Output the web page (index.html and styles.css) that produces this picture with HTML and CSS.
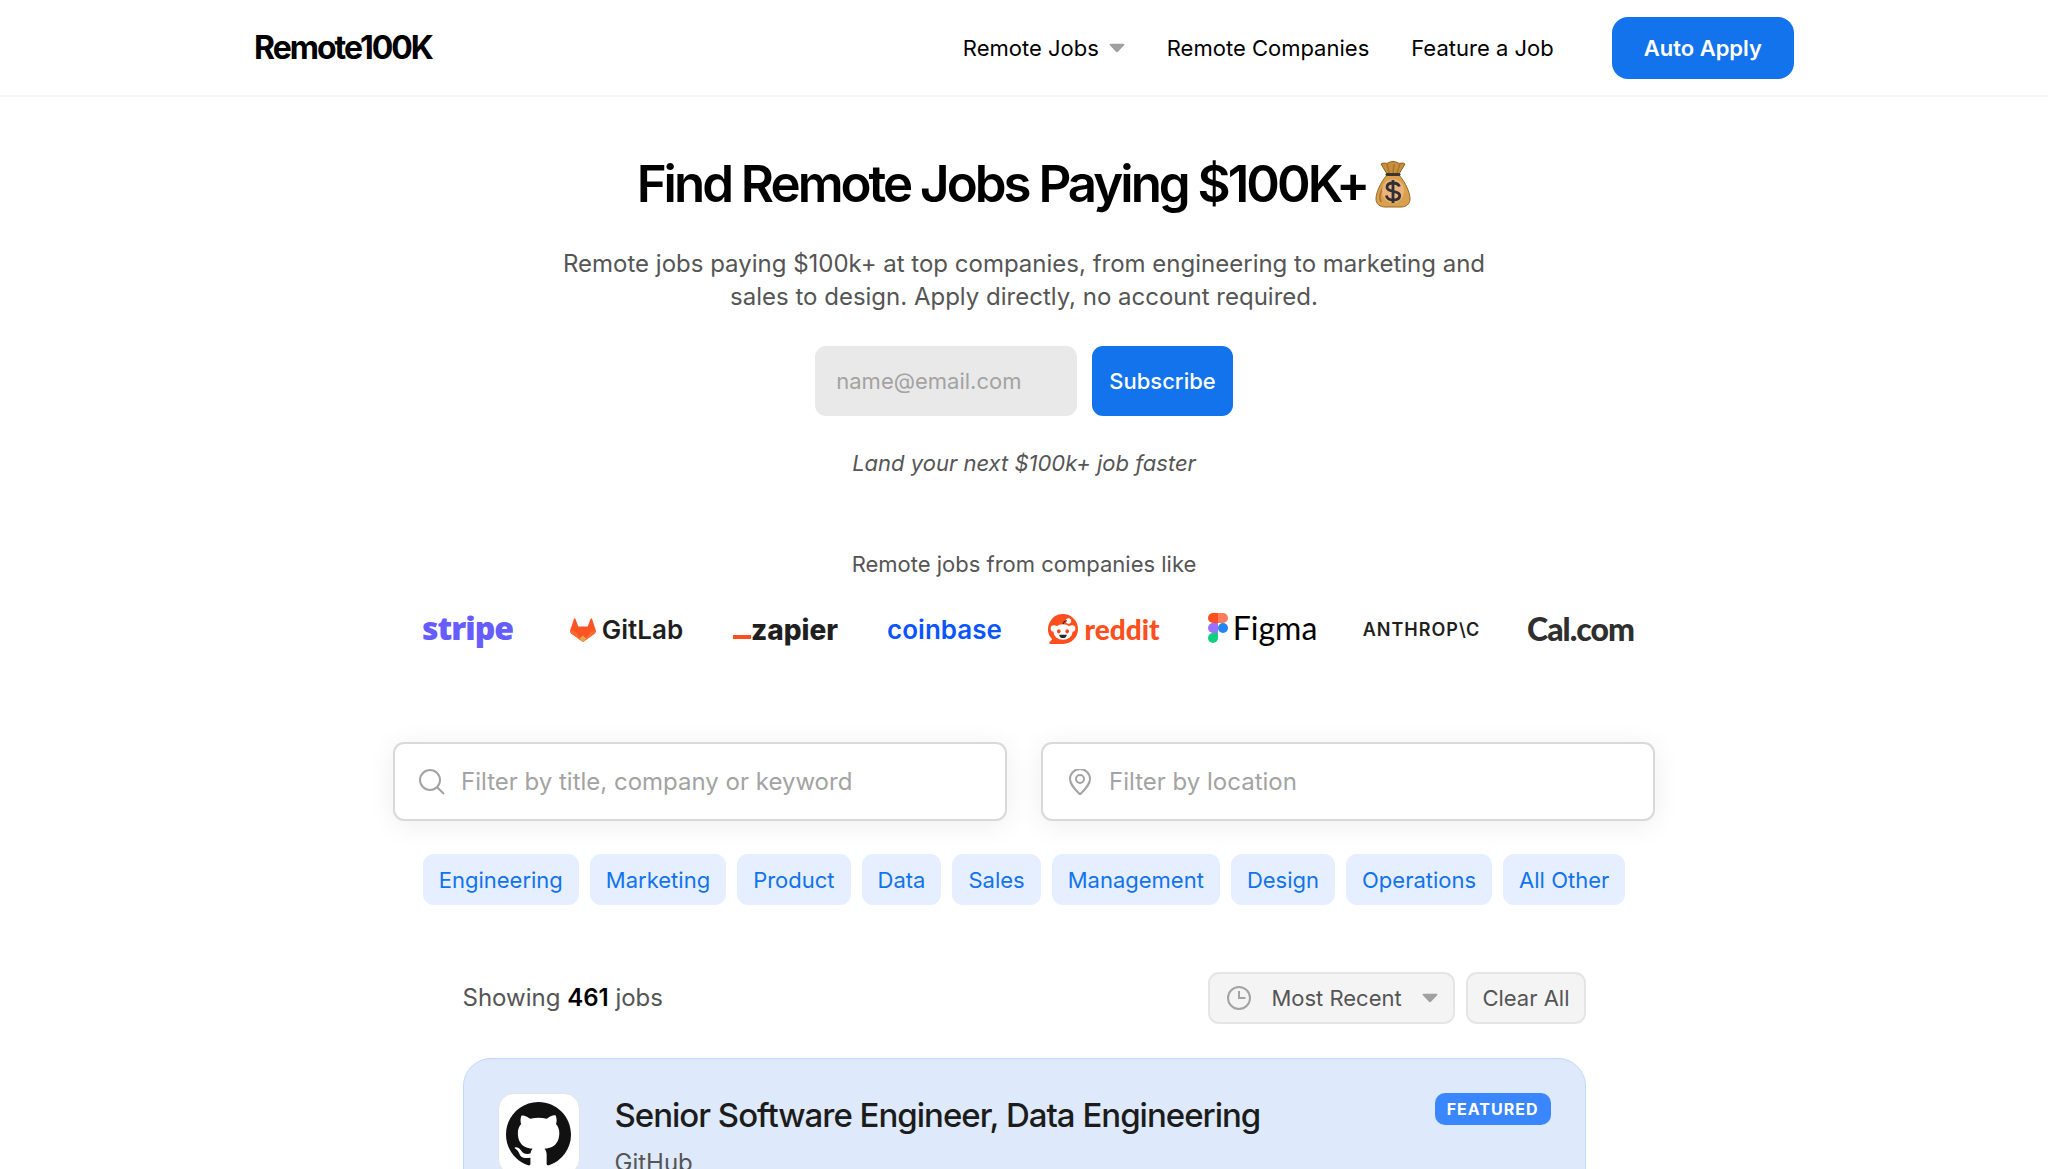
FILE: index.html
```html
<!DOCTYPE html>
<html lang="en">
<head>
    <meta charset="UTF-8">
    <meta name="viewport" content="width=device-width, initial-scale=1.0">
    <title>Remote100K</title>
    <link rel="stylesheet" href="styles.css">
</head>
<body>
    <header class="site-header">
        <div class="header-inner">
            <a class="brand" href="#">Remote100K</a>
            <nav class="nav">
                <button class="nav-link" type="button">
                    Remote Jobs
                    <svg class="caret" viewBox="0 0 16 10" aria-hidden="true"><path d="M1.600.8h12.800c.9 0 1.300.9.7 1.500L9 8.800c-.6.6-1.400.6-2 0L.9 2.300C.3 1.700.7.8 1.600.8z"/></svg>
                </button>
                <a class="nav-link" href="#">Remote Companies</a>
                <a class="nav-link" href="#">Feature a Job</a>
                <a class="btn-apply" href="#">Auto Apply</a>
            </nav>
        </div>
    </header>

    <main>
        <section class="hero">
            <h1>Find Remote Jobs Paying $100K+<svg class="money-bag" viewBox="0 0 36 48" aria-hidden="true">
                <path d="M6 4c3-2 5 0 7-1 3-2 7-2 10 0 2 1 5-1 7 1l-6 10H12z" fill="#c98f3a" stroke="#8a5f22"/>
                <path d="M12 15C5 23 1 33 1 39c0 5 4 8 9 8h16c5 0 9-3 9-8 0-6-4-16-11-24z" fill="#d9a04e" stroke="#96692b"/>
                <path d="M9 26c-4 6-5 12-3 16M12 4l2 9M19 4l-1 9M25 4l-3 9" fill="none" stroke="#a8752f" stroke-width="1.500"/>
                <ellipse cx="18" cy="31" rx="11" ry="12" fill="#eeb27c"/>
                <path d="M12 14.500h12" stroke="#3b3630" stroke-width="3" stroke-linecap="round"/>
                <path d="M24.500 26.500c-1-2.500-3.500-3.500-6.500-3.500-3.500 0-6 1.500-6 4.200 0 5.800 12.700 2.300 12.700 8.300 0 3-2.700 4.500-6.500 4.500-3.500 0-6.200-1.400-6.900-4.500M18 20v23" fill="none" stroke="#2f3035" stroke-width="2.800"/>
            </svg></h1>
            <p class="intro">Remote jobs paying $100k+ at top companies, from engineering to marketing and sales to design. Apply directly, no account required.</p>
            <form class="subscribe">
                <input type="email" placeholder="name@email.com" aria-label="Email">
                <button type="submit">Subscribe</button>
            </form>
            <p class="tagline">Land your next $100k+ job faster</p>
        </section>

        <section class="companies">
            <p>Remote jobs from companies like</p>
            <ul class="logos">
                <li class="stripe">stripe</li>
                <li class="gitlab">
                    <svg viewBox="0 0 26 24" aria-hidden="true">
                        <path d="M13 24 1.200 15.400C.2 14.600-.1 13.300.3 12L4 .8c.2-.7 1.100-.7 1.400 0L8.300 8.500h9.400L20.600.8c.3-.7 1.200-.7 1.400 0L25.700 12c.4 1.300.1 2.600-.9 3.400z" fill="#fc5424"/>
                        <path d="m.3 12 5 1.500L13 24 1.200 15.400C.2 14.600-.1 13.300.3 12zM25.700 12l-5 1.500L13 24l11.800-8.600c1-.8 1.300-2.100.9-3.400z" fill="#fc6a2c"/>
                        <path d="m9.600 20.500 3.400-3 3.400 3L13 24z" fill="#e5a54e"/>
                    </svg>
                    GitLab
                </li>
                <li class="zapier"><span class="underscore"></span>zapier</li>
                <li class="coinbase">coinbase</li>
                <li class="reddit">
                    <svg viewBox="0 0 32 32" aria-hidden="true">
                        <path d="M16 1a15 15 0 1 1 0 30H3.500c-1.200 0-1.700-1.200-.9-2l2.600-2.700A15 15 0 0 1 16 1z" fill="#ff4f1c"/>
                        <circle cx="7" cy="15.500" r="3.300" fill="#fff"/>
                        <circle cx="25" cy="15.500" r="3.300" fill="#fff"/>
                        <circle cx="21.500" cy="8" r="2.700" fill="#fff"/>
                        <path d="M16 12.500c0-3 1.500-4.500 4-4.700" fill="none" stroke="#3a1c14" stroke-width="1.100"/>
                        <ellipse cx="16" cy="19" rx="9.500" ry="7.800" fill="#fff"/>
                        <ellipse cx="11.800" cy="18.300" rx="1.800" ry="2.100" fill="#f0441a"/>
                        <ellipse cx="20.200" cy="18.300" rx="1.800" ry="2.100" fill="#f0441a"/>
                        <path d="M12.200 21.700h7.600c0 2-1.700 3.400-3.800 3.400s-3.800-1.400-3.800-3.400z" fill="#1d2a2e"/>
                    </svg>
                    reddit
                </li>
                <li class="figma">
                    <svg viewBox="0 0 20 30" aria-hidden="true">
                        <path d="M5 0h5v10H5A5 5 0 0 1 5 0z" fill="#ff4f1c"/>
                        <path d="M10 0h5a5 5 0 0 1 0 10h-5z" fill="#ff7c5c"/>
                        <path d="M5 10h5v10H5a5 5 0 0 1 0-10z" fill="#9b72ff"/>
                        <circle cx="15" cy="15" r="5" fill="#2287f5"/>
                        <path d="M5 20h5v5a5 5 0 1 1-5-5z" fill="#12cf82"/>
                    </svg>
                    Figma
                </li>
                <li class="anthropic">ANTHROP\C</li>
                <li class="cal">Cal.com</li>
            </ul>
        </section>

        <section class="filters">
            <div class="search-row">
                <label class="search-box">
                    <svg viewBox="0 0 26 26" aria-hidden="true"><circle cx="11" cy="11" r="10"/><path d="m18.200 18.200 6.800 6.800"/></svg>
                    <input type="text" placeholder="Filter by title, company or keyword" aria-label="Filter by title, company or keyword">
                </label>
                <label class="search-box">
                    <svg viewBox="0 0 26 26" aria-hidden="true"><path d="M13 25.500C7.500 19.500 3 15.500 3 10a10 10 0 0 1 20 0c0 5.500-4.500 9.500-10 15.500z"/><circle cx="13" cy="10" r="4"/></svg>
                    <input type="text" placeholder="Filter by location" aria-label="Filter by location">
                </label>
            </div>
            <div class="tags">
                <button type="button">Engineering</button>
                <button type="button">Marketing</button>
                <button type="button">Product</button>
                <button type="button">Data</button>
                <button type="button">Sales</button>
                <button type="button">Management</button>
                <button type="button">Design</button>
                <button type="button">Operations</button>
                <button type="button">All Other</button>
            </div>
        </section>

        <section class="results">
            <div class="results-bar">
                <p>Showing <strong>461</strong> jobs</p>
                <div class="controls">
                    <label class="sort">
                        <svg class="clock" viewBox="0 0 24 24" aria-hidden="true"><circle cx="12" cy="12" r="11"/><path d="M12 5v7h6.500"/></svg>
                        <select aria-label="Sort jobs">
                            <option>Most Recent</option>
                        </select>
                        <svg class="caret" viewBox="0 0 16 10" aria-hidden="true"><path d="M1.600.8h12.800c.9 0 1.300.9.7 1.500L9 8.800c-.6.6-1.400.6-2 0L.9 2.300C.3 1.700.7.8 1.600.8z"/></svg>
                    </label>
                    <button class="clear" type="button">Clear All</button>
                </div>
            </div>

            <article class="job-card">
                <div class="avatar">
                    <svg viewBox="0 0 16 16" aria-label="GitHub"><path d="M8 0C3.580 0 0 3.580 0 8c0 3.540 2.290 6.530 5.470 7.590.4.070.55-.17.55-.38 0-.19-.01-.82-.01-1.490-2.010.37-2.530-.49-2.690-.94-.09-.23-.48-.94-.82-1.130-.28-.15-.68-.52-.01-.53.63-.01 1.080.58 1.230.82.72 1.210 1.870.87 2.330.66.070-.52.28-.87.51-1.070-1.780-.2-3.640-.89-3.640-3.950 0-.87.31-1.590.82-2.150-.08-.2-.36-1.020.08-2.120 0 0 .67-.21 2.200.82.64-.18 1.320-.27 2-.27s1.360.09 2 .27c1.530-1.040 2.200-.82 2.200-.82.44 1.100.16 1.920.08 2.120.51.56.82 1.270.82 2.150 0 3.070-1.870 3.750-3.650 3.950.29.25.54.73.54 1.480 0 1.070-.01 1.930-.01 2.200 0 .21.15.46.55.38A8.010 8.010 0 0 0 16 8c0-4.420-3.580-8-8-8z"/></svg>
                </div>
                <div class="job-info">
                    <h2>Senior Software Engineer, Data Engineering</h2>
                    <p>GitHub</p>
                </div>
                <span class="badge">FEATURED</span>
            </article>
        </section>
    </main>
</body>
</html>
```

FILE: styles.css
```css
:root {
    --blue: #1273ed;
    --blue-light: #e5efff;
    --text: #555;
    --muted: #a3a3a3;
    --border: #d9d9d9;
}

* {
    margin: 0;
    padding: 0;
    box-sizing: border-box;
}

body {
    font-family: Inter, 'Liberation Sans', sans-serif;
    font-size: 22px;
    line-height: 28px;
    color: var(--text);
    background: #fff;
}

button,
input,
select {
    font: inherit;
    color: inherit;
    border: none;
    background: none;
}

button {
    cursor: pointer;
}

a {
    color: inherit;
    text-decoration: none;
}

/* Header */
.site-header {
    border-bottom: 2px solid #f5f5f5;
}

.header-inner {
    display: flex;
    align-items: center;
    justify-content: space-between;
    max-width: 1540px;
    margin: 0 auto;
    padding: 17px 0 16px;
}

.brand {
    font-size: 32px;
    font-weight: 700;
    letter-spacing: -2px;
    color: #000;
}

.nav {
    display: flex;
    align-items: center;
    gap: 42px;
}

.nav-link {
    display: flex;
    align-items: center;
    gap: 10px;
    color: #000;
}

.caret {
    width: 16px;
    height: 10px;
    fill: #a0a0a3;
}

.btn-apply {
    margin-left: 16px;
    padding: 17px 32px;
    border-radius: 16px;
    font-weight: 600;
    color: #fff;
    background: var(--blue);
}

/* Hero */
.hero {
    display: flex;
    flex-direction: column;
    align-items: center;
    gap: 33px;
    padding-top: 57px;
    text-align: center;
}

h1 {
    display: flex;
    align-items: center;
    gap: 8px;
    font-size: 51px;
    line-height: 60px;
    font-weight: 600;
    letter-spacing: -3px;
    color: #000;
}

.money-bag {
    width: 36px;
    height: 48px;
}

.intro {
    max-width: 960px;
    font-size: 24px;
    line-height: 33px;
}

.subscribe {
    display: flex;
    gap: 15px;
}

.subscribe input {
    width: 262px;
    height: 70px;
    padding: 0 21px;
    border-radius: 11px;
    background: #e9e9e9;
}

.subscribe button {
    padding: 0 17px;
    border-radius: 11px;
    font-weight: 500;
    color: #fff;
    background: var(--blue);
}

::placeholder {
    color: var(--muted);
    opacity: 1;
}

.tagline {
    font-style: italic;
}

/* Company logos */
.companies {
    display: flex;
    flex-direction: column;
    align-items: center;
    gap: 32px;
    padding-top: 73px;
}

.logos {
    display: grid;
    grid-template-columns: repeat(8, 1fr);
    width: 100%;
    max-width: 1272px;
    list-style: none;
}

.logos li {
    display: flex;
    align-items: center;
    justify-content: center;
    height: 40px;
    font-size: 28px;
    line-height: 40px;
    color: #1f1f1f;
}

.logos .stripe {
    padding-bottom: 4px;
    font-family: 'Open Sans', sans-serif;
    font-weight: 800;
    letter-spacing: -1px;
    font-size: 32px;
    color: #655dff;
}

.logos .gitlab {
    gap: 6px;
    font-size: 26px;
    font-weight: 600;
}

.gitlab svg {
    width: 26px;
    height: 24px;
}

.logos .zapier {
    font-weight: 800;
}

.underscore {
    align-self: flex-end;
    width: 18px;
    height: 4px;
    margin-bottom: 11px;
    background: #ff4f1c;
}

.logos .coinbase {
    font-size: 26px;
    font-weight: 600;
    color: #0a55ff;
}

.logos .reddit {
    gap: 5px;
    padding-bottom: 2px;
    font-family: Lato, sans-serif;
    font-weight: 900;
    color: #ff4f1c;
}

.reddit svg {
    width: 32px;
    height: 32px;
}

.logos .figma {
    gap: 5px;
    padding-bottom: 4px;
    font-family: Lato, sans-serif;
    font-size: 32px;
    color: #000;
}

.figma svg {
    width: 20px;
    height: 30px;
}

.logos .anthropic {
    font-size: 18px;
    font-weight: 600;
    letter-spacing: 1px;
}

.logos .cal {
    padding-bottom: 2px;
    font-family: Lato, sans-serif;
    font-size: 32px;
    font-weight: 900;
    letter-spacing: -1px;
    color: #2f2f2f;
}

/* Filters */
.filters {
    display: flex;
    flex-direction: column;
    align-items: center;
    gap: 33px;
    padding-top: 92px;
}

.search-row {
    display: grid;
    grid-template-columns: 1fr 1fr;
    gap: 34px;
    width: 100%;
    max-width: 1262px;
}

.search-box {
    display: flex;
    align-items: center;
    gap: 16px;
    height: 79px;
    padding: 0 24px;
    border: 2px solid var(--border);
    border-radius: 11px;
    background: #fff;
    box-shadow: 0 4px 28px rgba(0, 0, 0, 0.07);
}

.search-box svg {
    flex: none;
    width: 26px;
    height: 26px;
    fill: none;
    stroke: var(--muted);
    stroke-width: 2;
}

.search-box input {
    flex: 1;
    min-width: 0;
    font-size: 24px;
    outline: none;
}

.tags {
    display: flex;
    flex-wrap: wrap;
    justify-content: center;
    gap: 11px;
}

.tags button {
    height: 51px;
    padding: 0 16px;
    border-radius: 11px;
    color: var(--blue);
    background: var(--blue-light);
}

/* Results */
.results {
    display: flex;
    flex-direction: column;
    gap: 34px;
    max-width: 1123px;
    margin: 0 auto;
    padding-top: 67px;
}

.results-bar {
    display: flex;
    align-items: center;
    justify-content: space-between;
    font-size: 24px;
}

.results-bar strong {
    font-weight: 600;
    color: #000;
}

.controls {
    display: flex;
    gap: 11px;
    font-size: 22px;
}

.sort,
.clear {
    display: flex;
    align-items: center;
    height: 52px;
    border: 2px solid #e5e5e5;
    border-radius: 11px;
    background: #f4f4f4;
}

.sort {
    gap: 20px;
    padding: 0 15px 0 17px;
}

.sort select {
    appearance: none;
}

.clock {
    width: 24px;
    height: 24px;
    fill: none;
    stroke: var(--muted);
    stroke-width: 2;
}

.clear {
    padding: 0 14px;
}

.job-card {
    display: flex;
    align-items: flex-start;
    gap: 35px;
    padding: 34px;
    border: 1px solid #bfd9fb;
    border-radius: 28px;
    background: #deeafb;
}

.avatar {
    display: flex;
    flex: none;
    align-items: center;
    justify-content: center;
    width: 82px;
    height: 82px;
    border: 1px solid #e5e5e5;
    border-radius: 16px;
    background: #fff;
}

.avatar svg {
    width: 65px;
    height: 65px;
    fill: #111;
}

.job-info {
    flex: 1;
}

.job-info h2 {
    font-size: 33px;
    line-height: 44px;
    font-weight: 500;
    letter-spacing: -1px;
    color: #1c1c1c;
}

.job-info p {
    margin-top: 9px;
    font-size: 24px;
    line-height: 33px;
}

.badge {
    padding: 2px 12px;
    border-radius: 10px;
    font-size: 16px;
    font-weight: 700;
    letter-spacing: 1px;
    color: #fff;
    background: #3a86ff;
}
```
